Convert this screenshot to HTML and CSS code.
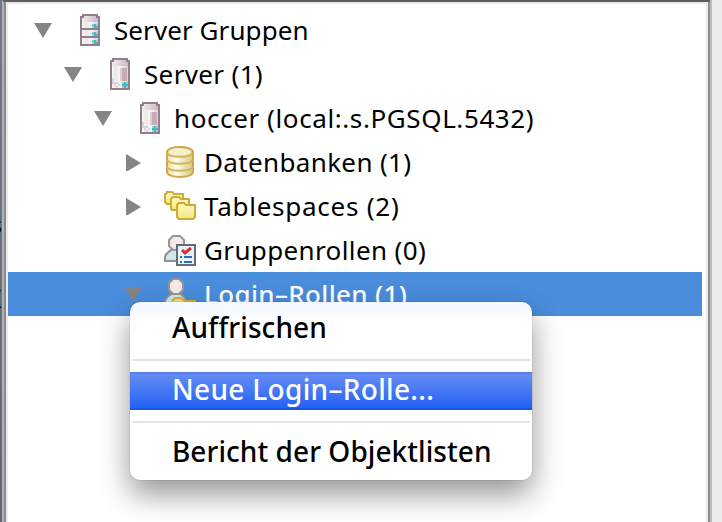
FILE: index.html
```
<!DOCTYPE html>
<html lang="de">
<head>
<meta charset="utf-8">
<title>Objektbrowser</title>
<link rel="stylesheet" href="styles.css">
</head>
<body>
<svg class="defs" width="0" height="0">
  <defs>
    <linearGradient id="metal"><stop offset="0" stop-color="#fff"/><stop offset=".25" stop-color="#e9e7e8"/><stop offset=".5" stop-color="#f8f6f7"/><stop offset="1" stop-color="#d9cdd3"/></linearGradient>
    <linearGradient id="cap"><stop offset="0" stop-color="#f3ecf0"/><stop offset="1" stop-color="#cdb9c5"/></linearGradient>
    <linearGradient id="gold"><stop offset="0" stop-color="#eadf9f"/><stop offset=".35" stop-color="#fffef2"/><stop offset="1" stop-color="#d9c778"/></linearGradient>
    <linearGradient id="folder" x2="0" y2="1"><stop offset="0" stop-color="#fffbc4"/><stop offset="1" stop-color="#f0e87c"/></linearGradient>
    <symbol id="server" viewBox="0 0 32 32">
      <path d="M9 1h14v2h2v28H7V3h2z" fill="url(#metal)" stroke="#947e8b" stroke-width="2"/>
      <path d="M10 2h12v2h2v4H8V4h2z" fill="url(#cap)"/>
      <path d="M18 10h5v13h-5z" fill="#c9abb3"/><path d="M16 10h2v13h-2z" fill="#e1ced3"/>
      <path d="M8 20h2v2h2v2h2v2h2v2h-2v2h-2v-2h-2v-2H8z" fill="#d8d5d7"/>
      <path d="M10 22h2v2h-2zm2 4h2v2h-2zm-4 2h2v2H8zm6-6h2v2h-2z" fill="#f7f7f7"/>
      <path d="M18 24h6v6h-6z" fill="#9bcdd2"/><path d="M20 24h2v2h2v2h-2v2h-2v-2h-2v-2h2z" fill="#35bfc6"/>
    </symbol>
    <symbol id="servers" viewBox="0 0 32 32">
      <path d="M9 1h14v2h2v28H7V3h2z" fill="url(#metal)" stroke="#947e8b" stroke-width="2"/>
      <path d="M10 2h12v2h2v4H8V4h2z" fill="url(#cap)"/>
      <path d="M8 15h16M8 23h16" stroke="#947e8b" stroke-width="2"/>
      <path d="M18 10h6v4h-6zm0 8h6v4h-6zm0 8h6v4h-6z" fill="#a9cdd3"/>
      <path d="M20 10h2v2h2v2h-4v-2h-2v-1h2zm0 8h2v2h2v2h-4v-2h-2v-1h2zm0 8h2v2h2v2h-4v-2h-2v-1h2z" fill="#35bfc6"/>
    </symbol>
    <symbol id="database" viewBox="0 0 32 32">
      <path d="M3 6C3 3 9 1 16 1s13 2 13 5v20c0 3-6 5-13 5S3 29 3 26z" fill="url(#gold)" stroke="#cda94b" stroke-width="2"/>
      <ellipse cx="16" cy="6" rx="11" ry="3.5" fill="#f5efcb"/>
      <path d="M3 7c3 5 23 5 26 0M3 14c3 5 23 5 26 0M3 21c3 5 23 5 26 0" fill="none" stroke="#cfb760" stroke-width="2"/>
    </symbol>
    <symbol id="folders" viewBox="0 0 32 32">
      <g fill="url(#folder)" stroke="#cfaa38" stroke-width="2">
        <path d="M1 12V4l2-1V2h5l2 2h9v8l-1 2H3z"/>
        <path d="M7 19V9l2-2h6l2 2h8v10l-1 1H8z"/>
        <path d="M13 27V15l2-2h5l2 2h9v12l-2 2H15z"/>
      </g>
    </symbol>
    <symbol id="person" viewBox="0 0 32 32">
      <path d="M1 27v-4c1-4 4-6 8-8h7c4 2 7 5 7 9v3z" fill="#d1e8ef" stroke="#8e9294" stroke-width="2"/>
      <path d="M10 15h5l-2 5z" fill="#fff"/>
      <path d="M9 2h7l4 4v6l-4 4H9l-4-4V6z" fill="#f5e9e7" stroke="#969696" stroke-width="2"/>
    </symbol>
    <symbol id="group" viewBox="0 0 32 32">
      <use href="#person" width="32" height="32"/>
      <path d="M13 11h18v20H13z" fill="#e5f4fb" stroke="#686c70" stroke-width="2"/>
      <path d="M18 16l3 3 6-5" fill="none" stroke="#d92d2d" stroke-width="3"/>
      <path d="M16 23h2m2 0h8M16 28h2m2 0h8" stroke="#2b6dbc" stroke-width="2"/>
    </symbol>
    <symbol id="login" viewBox="0 0 32 32">
      <path d="M1 27v-4c1-4 4-6 8-8h6c4 2 7 5 7 9v3z" fill="#d1e8ef" stroke="#8e9294" stroke-width="2"/>
      <path d="M9 1h6l4 4v7l-4 4H9l-4-4V5z" fill="#f5e9e7" stroke="#969696" stroke-width="2"/>
      <path d="M8 24l3-4h6l4 2h11v6H8z" fill="#f5e18a"/>
      <path d="M8 23l3-3h6l4 3h11" fill="none" stroke="#d6b238" stroke-width="2"/>
    </symbol>
    <symbol id="down" viewBox="0 0 18 18"><path d="M0 2h18L9 17z" fill="#858585"/></symbol>
    <symbol id="right" viewBox="0 0 18 18"><path d="M2 1v18l15-9z" fill="#858585"/></symbol>
  </defs>
</svg>
<div class="window">
  <div class="behind"><span class="g1">s</span><span class="g2">x</span></div>
  <div class="pane">
    <div class="tree">
      <div class="row"><svg class="arrow"><use href="#down"/></svg><svg class="icon"><use href="#servers"/></svg><span class="t1">Server Gruppen</span></div>
      <div class="row l2"><svg class="arrow"><use href="#down"/></svg><svg class="icon"><use href="#server"/></svg><span class="t2">Server (1)</span></div>
      <div class="row l3"><svg class="arrow"><use href="#down"/></svg><svg class="icon"><use href="#server"/></svg><span class="t3">hoccer (local:.s.PGSQL.5432)</span></div>
      <div class="row l4"><svg class="arrow"><use href="#right"/></svg><svg class="icon"><use href="#database"/></svg><span class="t4">Datenbanken (1)</span></div>
      <div class="row l4"><svg class="arrow"><use href="#right"/></svg><svg class="icon"><use href="#folders"/></svg><span class="t5">Tablespaces (2)</span></div>
      <div class="row l4"><svg class="arrow"></svg><svg class="icon"><use href="#group"/></svg><span class="t6">Gruppenrollen (0)</span></div>
      <div class="row l4 selected"><svg class="arrow"><use href="#down"/></svg><svg class="icon"><use href="#login"/></svg><span class="t7">Login–Rollen (1)</span></div>
    </div>
  </div>
  <div class="gutter"></div>
  <div class="menu">
    <div class="item"><span class="m1">Auffrischen</span></div>
    <div class="sep"></div>
    <div class="item active"><span class="m2">Neue Login–Rolle...</span></div>
    <div class="sep"></div>
    <div class="item"><span class="m3">Bericht der Objektlisten</span></div>
  </div>
</div>
</body>
</html>
```
FILE: styles.css
```
body {
  margin: 0;
  font-family: "Noto Sans", "Open Sans", sans-serif;
  font-size: 26px;
  color: #000;
}
.defs { position: absolute; }
.window {
  position: relative;
  display: flex;
  width: 722px;
  height: 522px;
  overflow: hidden;
  background: #ececec;
}
.behind {
  position: relative;
  width: 2px;
  overflow: hidden;
  background: linear-gradient(#727982, #62676f);
}
.behind span { position: absolute; right: 0; font-size: 22px; line-height: 30px; }
.g1 { top: 209px; }
.behind .g2 { top: 281px; font-size: 32px; }
.pane {
  box-sizing: border-box;
  width: 708px;
  border-top: 2px solid #5e5e5e;
  border-left: 2px solid #b2b3b5;
  background: #fff;
}
.tree {
  box-sizing: border-box;
  height: 520px;
  padding: 6px 6px 0 2px;
  border-left: 2px solid #8b8889;
  border-right: 2px solid #8f8f8f;
  box-shadow: inset 0 2px #ebebeb, inset 2px 0 #ebebeb, inset -2px 0 #ebebeb;
}
.gutter { width: 2px; background: #bdbdbd; }
.row {
  display: flex;
  align-items: center;
  height: 44px;
  padding-left: 26px;
  line-height: 44px;
  white-space: nowrap;
}
.l2 { padding-left: 56px; }
.l3 { padding-left: 86px; }
.l4 { padding-left: 116px; }
.selected { background: #4a8ddc; color: #fff; font-weight: 500; }
.arrow { width: 18px; height: 18px; margin-right: 22px; overflow: visible; }
.icon { width: 32px; height: 32px; margin-right: 8px; }
.t1 { letter-spacing: .08px; }
.t2 { letter-spacing: .35px; }
.t3 { letter-spacing: .6px; }
.t4 { letter-spacing: .35px; }
.t5 { letter-spacing: .75px; }
.t6 { letter-spacing: .37px; }
.t7 { letter-spacing: .35px; }
.menu {
  position: absolute;
  left: 130px;
  top: 302px;
  box-sizing: border-box;
  width: 402px;
  height: 178px;
  padding: 8px 0;
  border-radius: 10px;
  background: linear-gradient(#f4f9fe 0, #f7fbff 11px, #fff 17px);
  box-shadow: 0 0 1px rgba(0,0,0,.5), 0 14px 30px rgba(0,0,0,.42);
  font-size: 28px;
  font-weight: 500;
}
.item { height: 38px; padding-left: 42px; line-height: 34px; white-space: nowrap; }
.active {
  box-sizing: border-box;
  color: #fff;
  border-top: 2px solid #557fe9;
  border-bottom: 2px solid #1856e6;
  background: linear-gradient(#668cf5, #2362f3);
  line-height: 30px;
}
.sep { height: 2px; margin: 11px 2px; background: #e4e4e4; }
.m1 { letter-spacing: .1px; }
.m2 { letter-spacing: .32px; }
.m3 { letter-spacing: .06px; }
```
